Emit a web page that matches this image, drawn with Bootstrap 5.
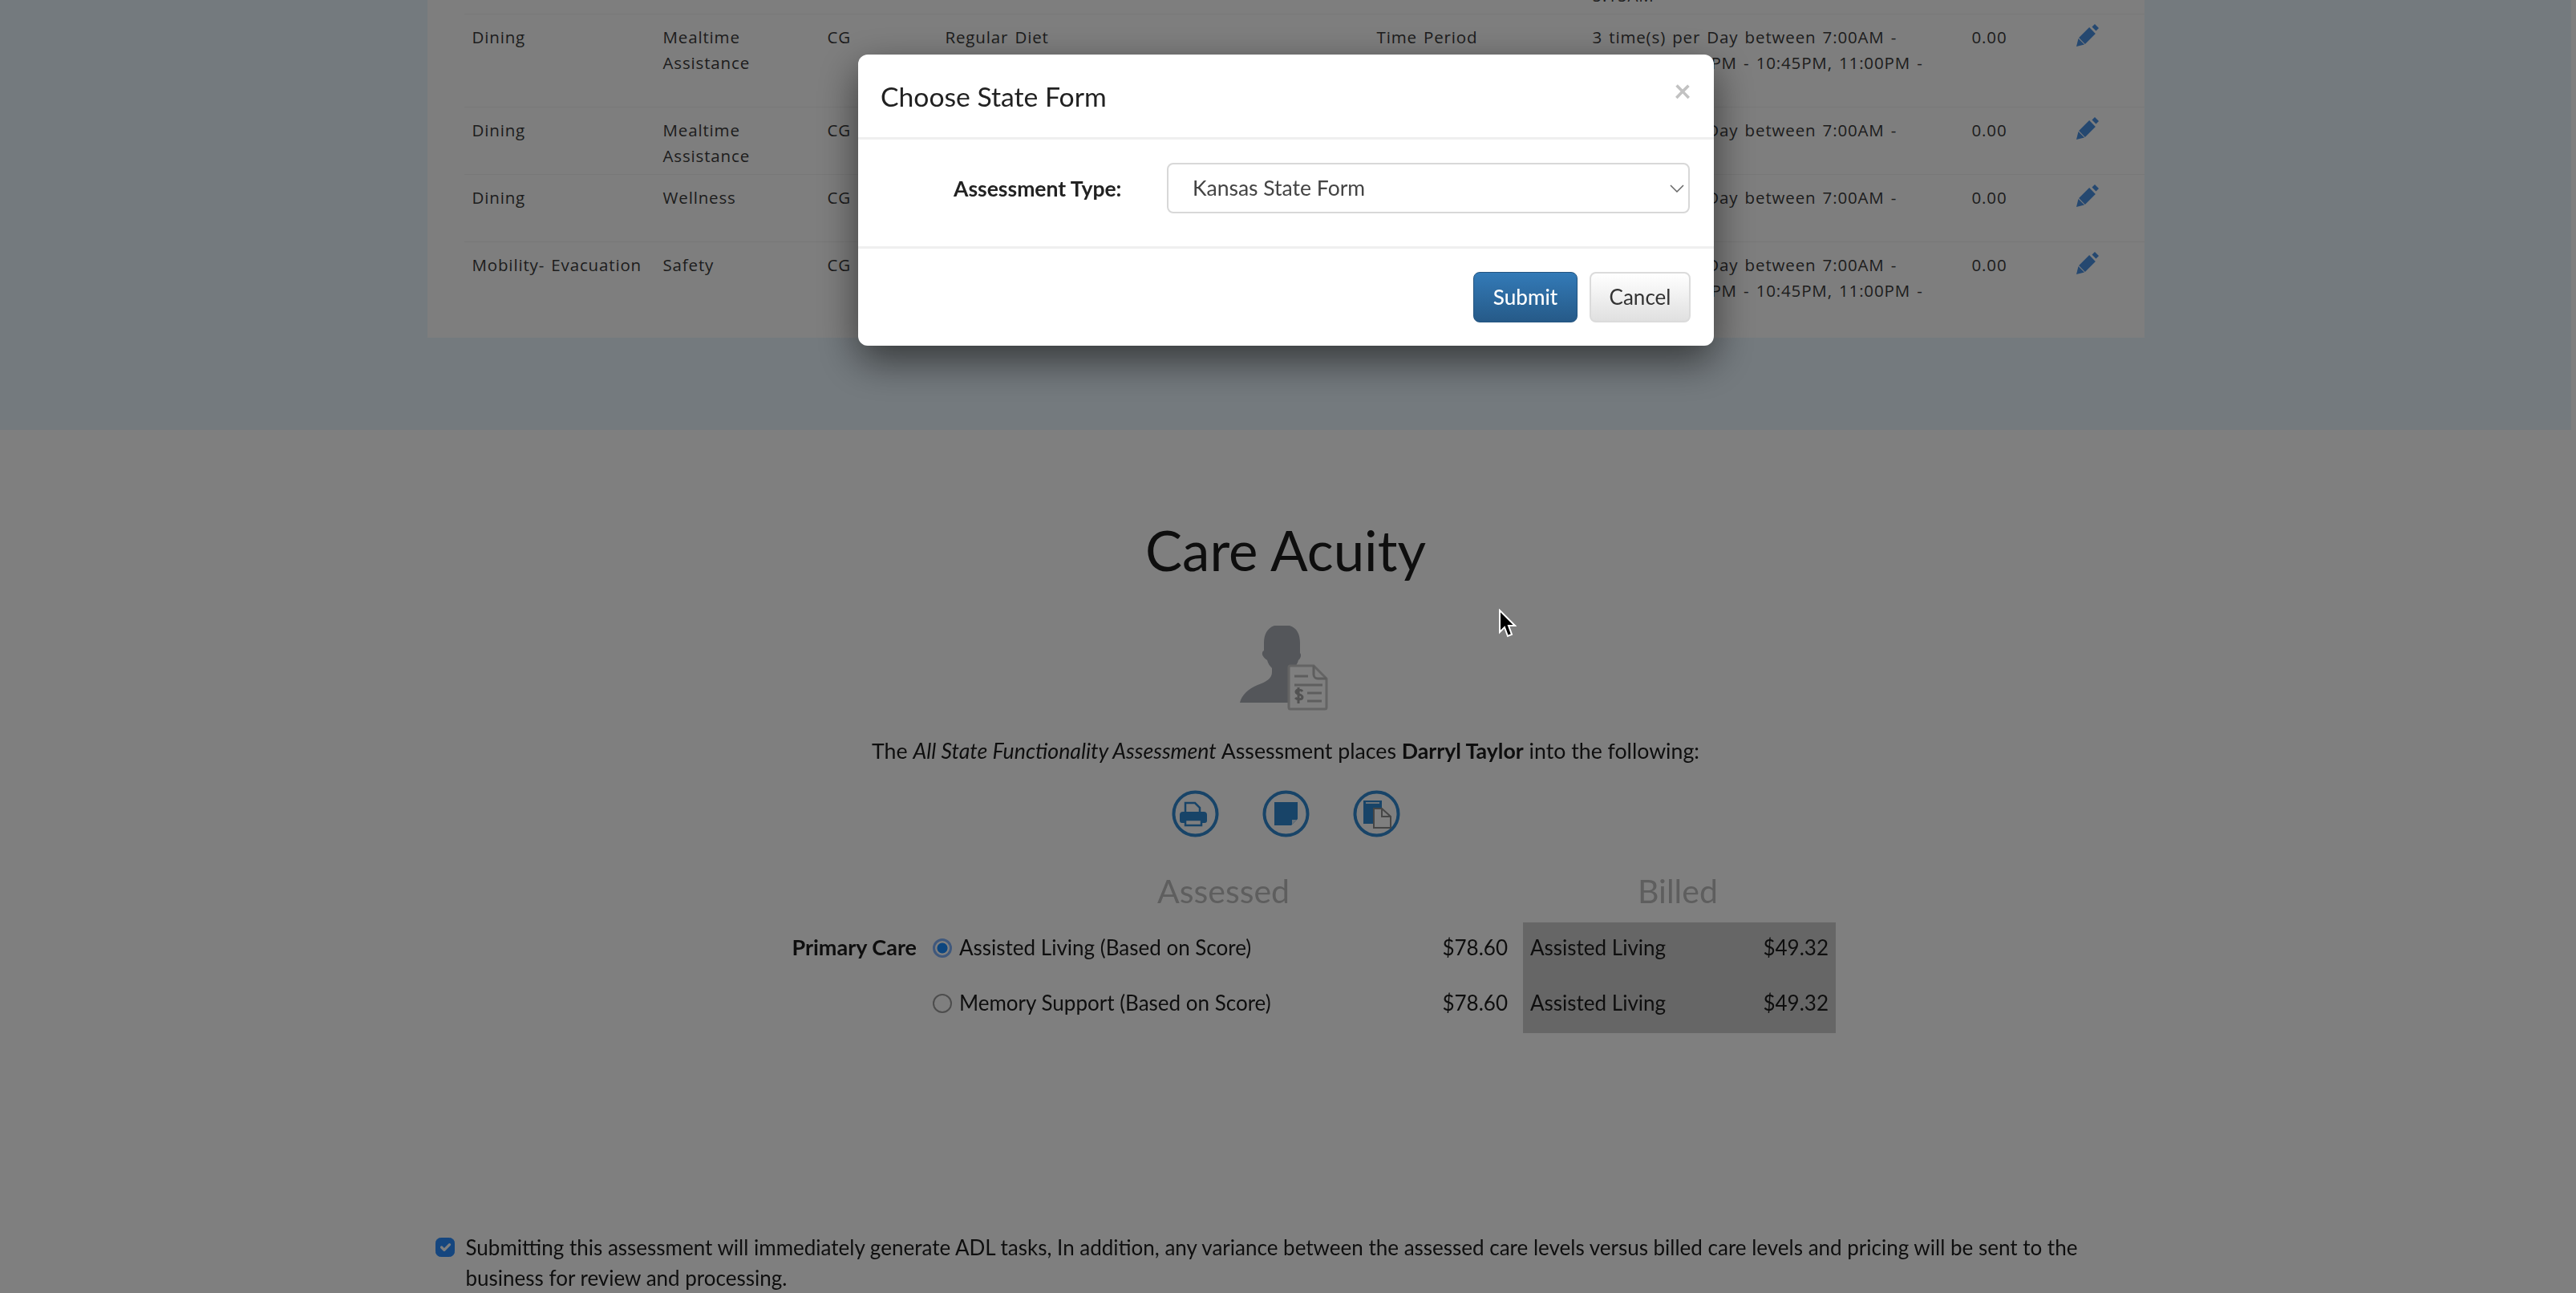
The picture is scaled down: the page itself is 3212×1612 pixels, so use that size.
<!DOCTYPE html>
<html lang="en">
<head>
  <meta charset="UTF-8">
  <title>Care Acuity</title>
  <link href="https://cdn.jsdelivr.net/npm/bootstrap@5.3.0/dist/css/bootstrap.min.css" rel="stylesheet">
  <style>
    body { font-family: "Lato", "Liberation Sans", sans-serif; color: #1c1c1c; height: 1612px; overflow: hidden; }
    .page-wrap { padding-right: 6px; filter: blur(.6px); }
    .tasks-band { background: #e8f4fc; height: 536px; overflow: hidden; }
    .tasks-panel { width: 2141px; margin: -98px auto 0; background: #fdfdfd; padding: 0 0 0 46px; height: 519px; }
    .tasks-table { width: 2095px; table-layout: fixed; margin: 0; font-family: "Open Sans", sans-serif; font-size: 20.500px; letter-spacing: .85px; word-spacing: 2px; line-height: 32px; color: #3a3a3a; }
    .tasks-table td { padding: 12px 10px 7px; background: transparent; border-color: #f0f0f0; color: inherit; white-space: nowrap; }
    .tasks-table tr.cut-row td { height: 116px; vertical-align: top; }
    .tasks-table tr:last-child td { border-bottom: 0; }
    .tasks-table svg { display: block; margin-top: -1px; }
    .pencil-body { stroke: #4a90e0; stroke-width: 11; fill: none; }
    .pencil-tip { fill: #4a90e0; }
    .acuity { width: 2141px; margin: 0 auto; text-align: center; }
    .acuity-title { font-size: 69px; font-weight: 400; margin: 110px 0 0; line-height: 80px; }
    .person-icon { display: block; margin: 54px auto 0; transform: translateX(-2px); }
    .acuity-line { font-size: 26.700px; line-height: 38px; margin: 31px 0 0; }
    .action-row { margin-top: 30px; gap: 54px; }
    .action-row svg { display: block; }
    .levels { width: 1340px; margin: 42px auto 0; text-align: left; font-size: 26px; }
    .levels-head { font-size: 41px; height: 64px; line-height: 50px; color: #bdbdbd; }
    .head-assessed { margin-left: 510px; }
    .head-billed { margin-left: 434px; }
    .levels-row { height: 69px; padding-bottom: 6px; }
    .billed-box { background: #cdcdcd; width: 390px; flex: none; margin-left: 19px; height: 69px; padding: 0 9px 6px; align-self: flex-start; }
    .care-label { width: 230px; flex: none; font-size: 27px; font-weight: 700; text-align: right; padding-right: 20px; }
    .care-radio { width: 24px; height: 24px; flex: none; margin: 0 9px 0 0; border: 2px solid #9a9a9a; }
    .care-radio:checked { background-color: #fff; border: 3px solid #7fb0f8; background-image: radial-gradient(circle, #1a8cff 0 48%, #fff 54%); }
    .care-name { width: 602px; flex: none; }
    .care-price { width: 82px; flex: none; text-align: right; }
    .consent { width: 2141px; margin: 248px auto 0; font-size: 26px; line-height: 38px; padding-left: 10px; }
    .consent-check { width: 24px; height: 24px; flex: none; margin: 7px 14px 0 0; border-radius: 3px; }
    .consent-check:checked { background-color: #2a8cff; border-color: #2a8cff; }
    .state-modal { z-index: 1055; }
    .state-modal .modal-dialog { width: 1067px; max-width: 1067px; margin: 68px 0 0 1070px; font-size: 26px; }
    .state-modal .modal-content { height: 363px; border: 0; border-radius: 12px; box-shadow: 0 18px 50px rgba(0, 0, 0, .55); filter: blur(.4px); }
    .state-modal .modal-header { height: 106px; padding: 0 28px; border-bottom: 3px solid #efefef; align-items: flex-start; }
    .state-modal .modal-title { font-size: 33.700px; line-height: 40px; margin-top: 32px; font-weight: 400; color: #222; }
    .close-x { border: 0; background: none; padding: 0; color: #c2c2c2; font-size: 38px; line-height: 1; margin-top: 25px; font-weight: 700; }
    .state-modal .modal-body { height: 133px; padding: 29px 30px 0 119px; flex: none; }
    .type-label { font-weight: 700; font-size: 26.500px; width: 208px; margin: 13px 58px 0 0; color: #222; white-space: nowrap; }
    .state-select { width: 652px; height: 63px; font-size: 26.500px; padding: 0 30px; color: #444; border: 2px solid #d8d8d8; border-radius: 8px; background-image: url("data:image/svg+xml,%3Csvg xmlns='http://www.w3.org/2000/svg' viewBox='0 0 18 10'%3E%3Cpath fill='none' stroke='%23666' stroke-width='1.500' d='M1 1l8 8 8-8'/%3E%3C/svg%3E"); background-size: 18px 10px; background-position: right 5px center; }
    .state-modal .modal-footer { padding: 29px 29px 0; border-top: 3px solid #efefef; gap: 15px; align-items: flex-start; }
    .state-modal .modal-footer .btn { margin: 0; height: 63px; font-size: 26px; border-radius: 8px; padding: 0; }
    .btn-submit { width: 130px; color: #fff; font-weight: 500; background: linear-gradient(#337ab7, #265a88); border: 1px solid #245580; }
    .btn-cancel { width: 126px; color: #333; background: linear-gradient(#fff, #e0e0e0); border: 2px solid #dbdbdb; }
    .mouse-arrow { position: fixed; left: 1867px; top: 759px; z-index: 1060; }
  </style>
</head>
<body>
  <div class="page-wrap">
    <div class="tasks-band">
      <div class="tasks-panel">
        <table class="table tasks-table">
          <colgroup>
            <col style="width: 238px"><col style="width: 205px"><col style="width: 147px"><col style="width: 538px">
            <col style="width: 269px"><col style="width: 473px"><col style="width: 129px"><col>
          </colgroup>
          <tbody>
            <tr><td></td><td></td><td></td><td></td><td></td><td>3 time(s) per Day between 7:00AM -<br>7:15AM, 12:00PM - 12:15PM,<br>5:15AM</td><td></td><td></td></tr>
            <tr class="cut-row">
              <td>Dining</td><td>Mealtime<br>Assistance</td><td>CG</td><td>Regular Diet</td><td>Time Period</td>
              <td>3 time(s) per Day between 7:00AM -<br>7:15AM, 10:30PM - 10:45PM, 11:00PM -<br>11:15PM</td><td>0.00</td>
              <td><svg width="30" height="30" viewBox="0 0 30 30"><path class="pencil-body" d="M8 22L21 9"/><path class="pencil-tip" d="M1 29l2.500-10 7.500 7.500zM22 3l2-2 5 5-2 2-1.500 1.500-5-5z"/></svg></td>
            </tr>
            <tr>
              <td>Dining</td><td>Mealtime<br>Assistance</td><td>CG</td><td></td><td></td>
              <td>3 time(s) per Day between 7:00AM -</td><td>0.00</td>
              <td><svg width="30" height="30" viewBox="0 0 30 30"><path class="pencil-body" d="M8 22L21 9"/><path class="pencil-tip" d="M1 29l2.500-10 7.500 7.500zM22 3l2-2 5 5-2 2-1.500 1.500-5-5z"/></svg></td>
            </tr>
            <tr>
              <td>Dining</td><td>Wellness<br>&nbsp;</td><td>CG</td><td></td><td></td>
              <td>3 time(s) per Day between 7:00AM -</td><td>0.00</td>
              <td><svg width="30" height="30" viewBox="0 0 30 30"><path class="pencil-body" d="M8 22L21 9"/><path class="pencil-tip" d="M1 29l2.500-10 7.500 7.500zM22 3l2-2 5 5-2 2-1.500 1.500-5-5z"/></svg></td>
            </tr>
            <tr class="cut-row">
              <td>Mobility- Evacuation</td><td>Safety</td><td>CG</td><td></td><td></td>
              <td>3 time(s) per Day between 7:00AM -<br>7:15AM, 10:30PM - 10:45PM, 11:00PM -</td><td>0.00</td>
              <td><svg width="30" height="30" viewBox="0 0 30 30"><path class="pencil-body" d="M8 22L21 9"/><path class="pencil-tip" d="M1 29l2.500-10 7.500 7.500zM22 3l2-2 5 5-2 2-1.500 1.500-5-5z"/></svg></td>
            </tr>
          </tbody>
        </table>
      </div>
    </div>

    <div class="acuity">
      <h1 class="acuity-title">Care Acuity</h1>
      <svg class="person-icon" width="110" height="106" viewBox="15 10 110 106">
        <path fill="#a8acb4" d="M58 10h19c9 3 13 10 13 22v12c2 2 1 7-2 9-1 4-3 7-6 10v43H15c2-9 10-17 22-22 11-4 18-8 18-16v-5c-3-3-5-6-6-10-3-2-7-6-6-9 0-2 1-2 2-3V32c0-11 4-19 13-22z"/>
        <path fill="#fff" stroke="#c8c8c8" stroke-width="3" d="M78 60h29l16 16v36a2 2 0 0 1-2 2H78a2 2 0 0 1-2-2V62a2 2 0 0 1 2-2z"/>
        <path fill="none" stroke="#bcbcbc" stroke-width="3" d="M107 60v11a5 5 0 0 0 5 5h11M83 73h17M83 84h35M99 94h18M99 104h18"/>
        <path fill="none" stroke="#a4a4a4" stroke-width="3" d="M93 92c-1-2-7-3-8 0-1 4 8 3 8 7 0 4-7 3-9 1M88 87v20"/>
      </svg>
      <p class="acuity-line">The <em>All State Functionality Assessment</em> Assessment places <strong>Darryl Taylor</strong> into the following:</p>
      <div class="d-flex justify-content-center action-row">
        <svg width="59" height="59" viewBox="0 0 59 59">
          <circle cx="29.500" cy="29.500" r="27" fill="none" stroke="#3088d0" stroke-width="4"/>
          <path fill="none" stroke="#3088d0" stroke-width="2.500" d="M17 28V16h12l6 6v6"/>
          <path fill="#3088d0" d="M14 27h26a4 4 0 0 1 4 4v7a3 3 0 0 1-3 3h-3v-5H16v5h-3a3 3 0 0 1-3-3v-7a4 4 0 0 1 4-4z"/>
          <path fill="none" stroke="#3088d0" stroke-width="2.500" d="M17 37h20v7H17z"/>
        </svg>
        <svg width="59" height="59" viewBox="0 0 59 59">
          <circle cx="29.500" cy="29.500" r="27" fill="none" stroke="#3088d0" stroke-width="4"/>
          <path fill="#3088d0" d="M15 15h29v21l-8 8H15z"/>
          <path fill="#d6e6f4" d="M37 37h6l-6 6z"/>
        </svg>
        <svg width="59" height="59" viewBox="0 0 59 59">
          <circle cx="29.500" cy="29.500" r="27" fill="none" stroke="#3088d0" stroke-width="4"/>
          <path fill="#3088d0" d="M13 13h23v10H26v19H13z"/>
          <path fill="#d6e6f4" d="M16 15h17v2H16z"/>
          <path fill="#fff" stroke="#8c8c8c" stroke-width="2" d="M26 23h10l11 10v14H26z"/>
          <path fill="none" stroke="#8c8c8c" stroke-width="2" d="M36 23v10h11"/>
        </svg>
      </div>
      <div class="levels">
        <div class="d-flex levels-head"><span class="head-assessed">Assessed</span><span class="head-billed">Billed</span></div>
        <div class="d-flex align-items-center levels-row">
          <span class="care-label">Primary Care</span>
          <input class="form-check-input care-radio" type="radio" name="care" checked>
          <span class="care-name">Assisted Living (Based on Score)</span>
          <span class="care-price">$78.60</span>
          <div class="d-flex align-items-center justify-content-between billed-box"><span>Assisted Living</span><span>$49.32</span></div>
        </div>
        <div class="d-flex align-items-center levels-row">
          <span class="care-label"></span>
          <input class="form-check-input care-radio" type="radio" name="care">
          <span class="care-name">Memory Support (Based on Score)</span>
          <span class="care-price">$78.60</span>
          <div class="d-flex align-items-center justify-content-between billed-box"><span>Assisted Living</span><span>$49.32</span></div>
        </div>
      </div>
    </div>

    <div class="d-flex consent">
      <input class="form-check-input consent-check" type="checkbox" checked>
      <span>Submitting this assessment will immediately generate ADL tasks, In addition, any variance between the assessed care levels versus billed care levels and pricing will be sent to the business for review and processing.</span>
    </div>
  </div>

  <div class="modal-backdrop show"></div>

  <div class="modal d-block state-modal">
    <div class="modal-dialog">
      <div class="modal-content">
        <div class="modal-header">
          <h5 class="modal-title">Choose State Form</h5>
          <button type="button" class="close-x ms-auto">×</button>
        </div>
        <div class="modal-body d-flex align-items-start">
          <label class="type-label" for="stateForm">Assessment Type:</label>
          <select id="stateForm" class="form-select state-select">
            <option>Kansas State Form</option>
          </select>
        </div>
        <div class="modal-footer">
          <button type="button" class="btn btn-submit">Submit</button>
          <button type="button" class="btn btn-cancel">Cancel</button>
        </div>
      </div>
    </div>
  </div>

  <svg class="mouse-arrow" width="24" height="38" viewBox="0 0 24 38">
    <path fill="#000" stroke="#fff" stroke-width="2" d="M3 2v27l6-6 4 11 5-2-4-11h8z"/>
  </svg>
</body>
</html>
